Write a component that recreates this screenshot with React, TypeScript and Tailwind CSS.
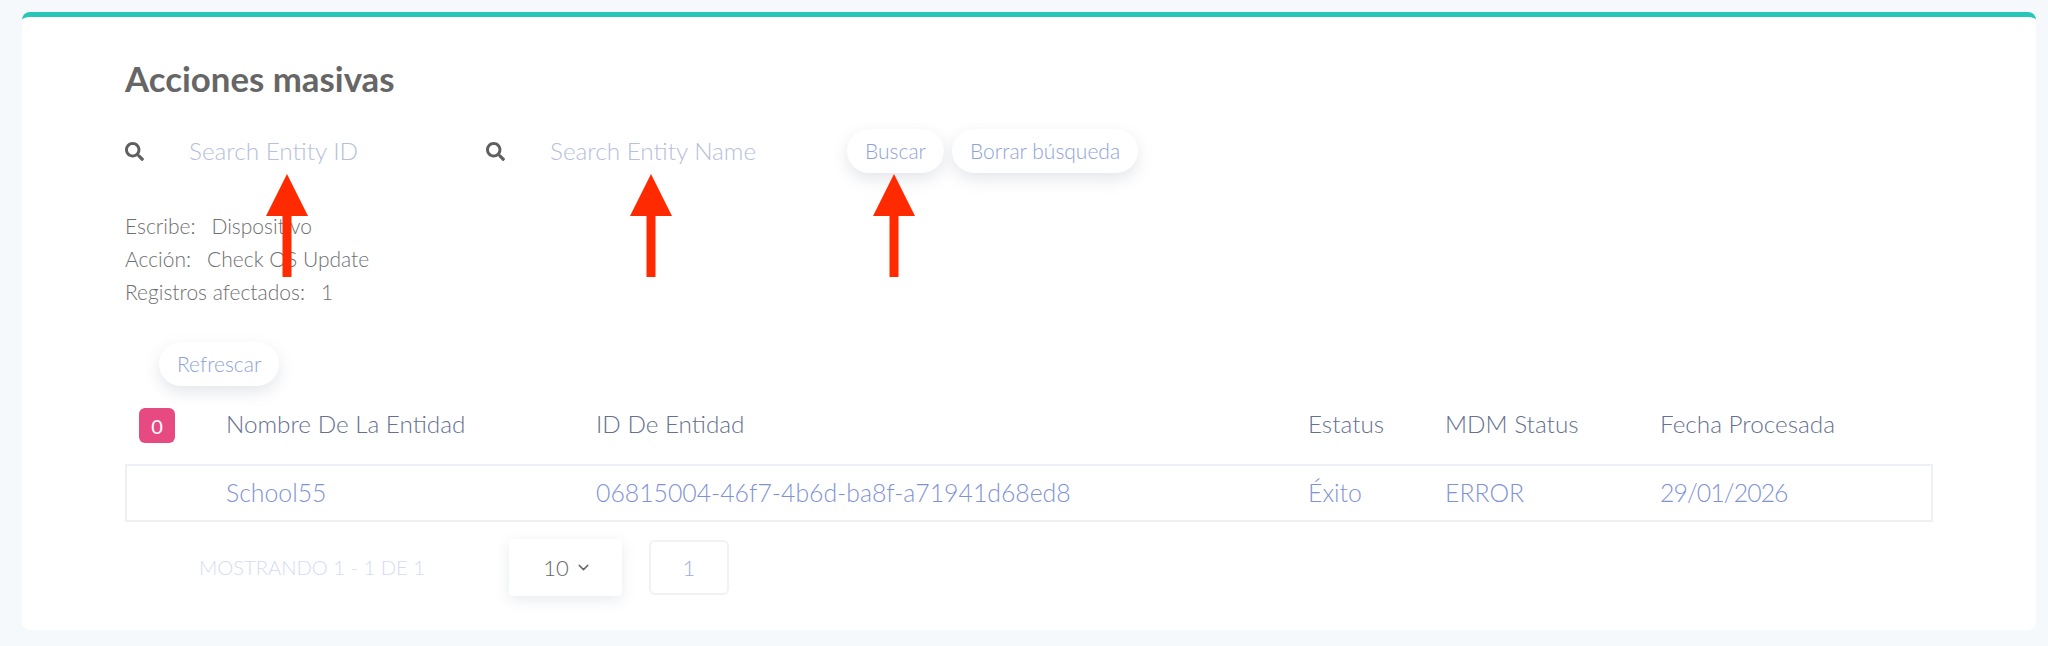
import { FaSearch } from 'react-icons/fa'
import { FiChevronDown } from 'react-icons/fi'

const pillButton = 'h-11 px-[18px] rounded-full bg-white text-[21px] font-light text-[#8ea3d8] shadow-[0_6px_16px_rgba(120,130,150,0.2)]'

const columns = 'grid grid-cols-[101px_370px_712px_137px_215px_1fr]'

const Arrow = ({ x }: { x: number }) => {
    return (
        <svg className='absolute top-[174px]' style={{ left: x - 22 }} width='44' height='104' viewBox='0 0 44 104'>
            <path d='M22 0 L43 42 L26.5 42 L26.5 103 L17.5 103 L17.5 42 L1 42 Z' fill='#ff2a00' />
        </svg>
    )
}

const App = () => {
    return (
        <div className='relative h-[646px] bg-[#f5f9fc] pt-3 pl-[22px] pr-3 font-["Lato",sans-serif]'>
            <div className='h-[618px] rounded-lg border-t-[5px] border-[#26c6b8] bg-white px-[103px]'>

                <h1 className='pt-[42px] text-[34.8px] leading-10 font-bold text-[#666666]'>Acciones masivas</h1>

                <div className='mt-[30px] flex items-center'>
                    <FaSearch className='w-[19px] h-[19px] text-[#5f5f5f]' />
                    <span className='ml-[45px] w-[297px] text-[24.3px] font-light text-[#b6c0dc]'>Search Entity ID</span>
                    <FaSearch className='w-[19px] h-[19px] text-[#5f5f5f]' />
                    <span className='ml-[45px] w-[297px] text-[24.3px] font-light text-[#b6c0dc]'>Search Entity Name</span>
                    <div className='flex gap-2'>
                        <button className={pillButton}>Buscar</button>
                        <button className={pillButton}>Borrar búsqueda</button>
                    </div>
                </div>

                <div className='mt-[36px] text-[21px] leading-[33px] font-light text-[#6f6f6f]'>
                    <div className='flex gap-4'><span>Escribe:</span><span>Dispositivo</span></div>
                    <div className='flex gap-4'><span>Acción:</span><span>Check OS Update</span></div>
                    <div className='flex gap-4'><span>Registros afectados:</span><span>1</span></div>
                </div>

                <button className={`${pillButton} ml-[34px] mt-[34px] block`}>Refrescar</button>

                <div className={`${columns} mt-[22px] h-[56px] text-[24.3px] font-light text-[#667090]`}>
                    <div className='pl-[14px]'>
                        <span className='flex items-center justify-center w-9 h-[35px] rounded-md bg-[#e64a80] text-white text-[20px] font-normal'>0</span>
                    </div>
                    <div className='leading-8'>Nombre De La Entidad</div>
                    <div className='leading-8'>ID De Entidad</div>
                    <div className='leading-8'>Estatus</div>
                    <div className='leading-8'>MDM Status</div>
                    <div className='leading-8'>Fecha Procesada</div>
                </div>

                <div className='grid grid-cols-[99px_370px_712px_137px_215px_1fr] h-[58px] items-center border-2 border-[#eef0f8] text-[24.8px] font-light text-[#7f93d3]'>
                    <div></div>
                    <div>School55</div>
                    <div>06815004-46f7-4b6d-ba8f-a71941d68ed8</div>
                    <div>Éxito</div>
                    <div>ERROR</div>
                    <div className='tracking-[-0.9px]'>29/01/2026</div>
                </div>

                <div className='mt-[17px] flex items-center'>
                    <span className='ml-[74px] w-[310px] text-[20.2px] font-light text-[#d4dcf2]'>MOSTRANDO 1 - 1 DE 1</span>
                    <div className='flex items-center justify-center gap-1.5 pl-1 w-[113px] h-[57px] rounded bg-white text-[22px] font-light text-[#666] shadow-[0_4px_14px_rgba(120,130,150,0.16)]'>
                        10 <FiChevronDown className='w-[17px] h-[17px]' />
                    </div>
                    <div className='ml-[27px] flex items-center justify-center w-[80px] h-[55px] rounded-md border-2 border-[#f0f2f6] text-[22px] font-light text-[#9aaedb]'>1</div>
                </div>
            </div>

            <Arrow x={287} />
            <Arrow x={651} />
            <Arrow x={894} />
        </div>
    )
}

export default App
